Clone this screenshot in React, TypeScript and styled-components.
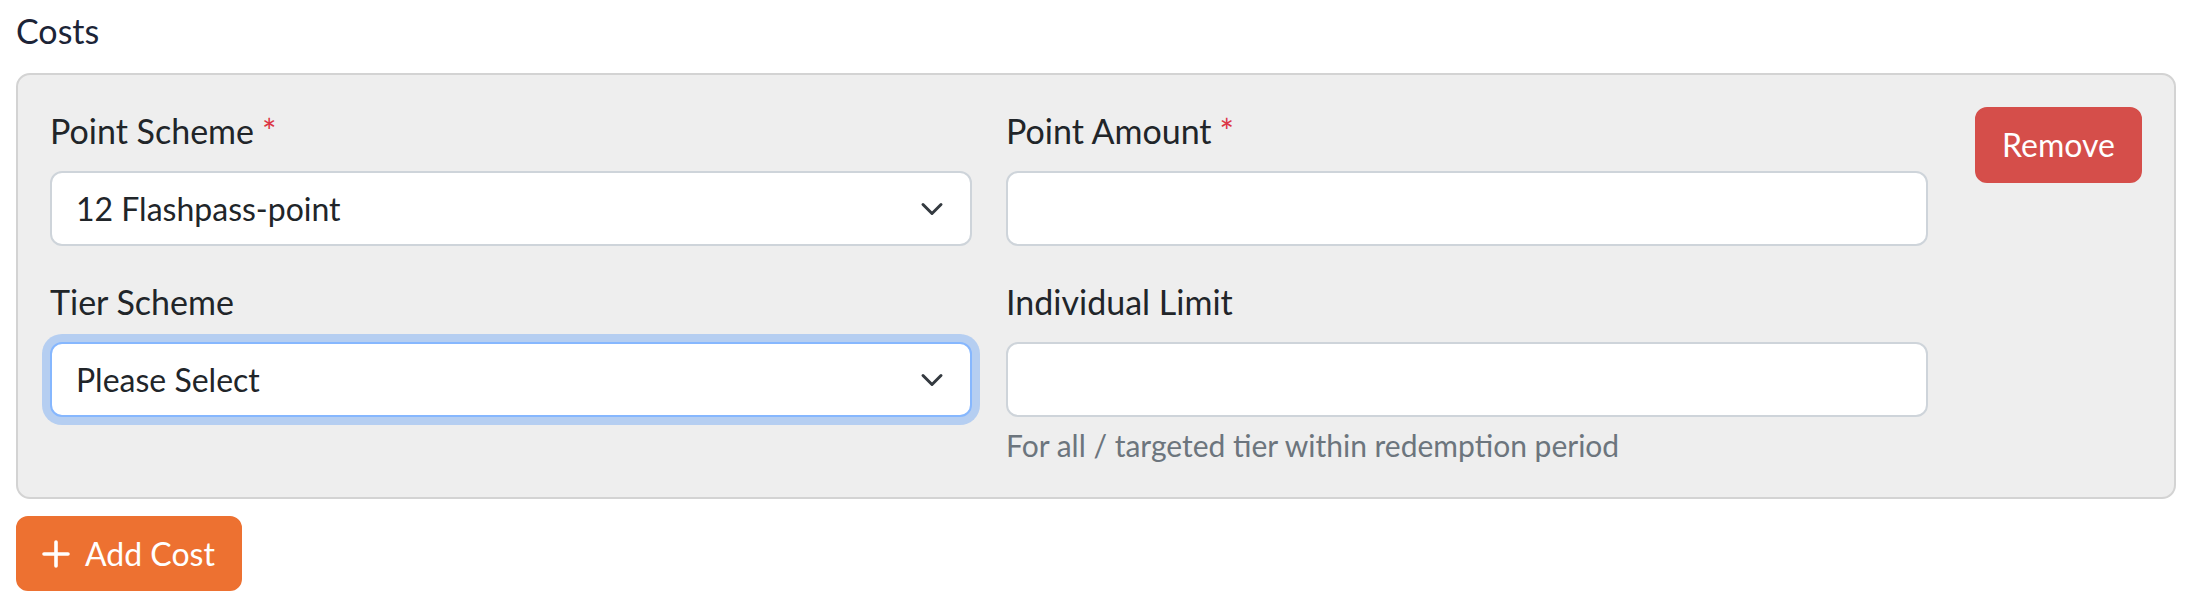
import React from "react";
import styled, { createGlobalStyle } from "styled-components";

const GlobalStyle = createGlobalStyle`
  html, body {
    margin: 0;
    padding: 0;
    background: #ffffff;
  }
  body {
    font-family: Lato, "Noto Sans", sans-serif;
    color: #212529;
  }
  * { box-sizing: border-box; }
`;

const Page = styled.div`
  padding: 7px 22px 0 16px;
  font-family: Lato, "Noto Sans", sans-serif;
`;

const Heading = styled.div`
  font-size: 34px;
  line-height: 48px;
  color: #1c2437;
  margin-bottom: 18px;
`;

const Panel = styled.div`
  display: flex;
  align-items: flex-start;
  background: #eeeeee;
  border: 2px solid #d3d3d3;
  border-radius: 14px;
  padding: 32px 32px 31px 32px;
`;

const Fields = styled.div`
  flex: 1;
  display: grid;
  grid-template-columns: 1fr 1fr;
  column-gap: 34px;
  row-gap: 32px;
`;

const Field = styled.div`
  display: flex;
  flex-direction: column;
  min-width: 0;
`;

const Label = styled.label`
  display: block;
  font-size: 34px;
  line-height: 48px;
  color: #212529;
  margin-bottom: 16px;
`;

const Required = styled.span`
  color: #dc3545;
  margin-left: 8px;
`;

const Control = styled.div<{ $focused?: boolean }>`
  display: flex;
  align-items: center;
  justify-content: space-between;
  height: 75px;
  padding: 0 24px;
  background: #ffffff;
  border: 2px solid ${(p) => (p.$focused ? "#86b7fe" : "#ced4da")};
  border-radius: 12px;
  box-shadow: ${(p) =>
    p.$focused ? "0 0 0 8px rgba(13, 110, 253, 0.25)" : "none"};
  font-size: 32px;
  line-height: 48px;
  color: #212529;
`;

const Value = styled.span`
  white-space: nowrap;
`;

const Chevron = styled.svg`
  width: 24px;
  height: 24px;
  flex: none;
  margin-right: 2px;
`;

const Help = styled.div`
  margin-top: 8px;
  font-size: 30px;
  line-height: 41px;
  color: #6c757d;
`;

const RemoveButton = styled.button`
  flex: none;
  margin-left: 47px;
  height: 76px;
  padding: 0 25px;
  border: 2px solid #d54e4a;
  border-radius: 12px;
  background: #d54e4a;
  color: #ffffff;
  font-family: Lato, "Noto Sans", sans-serif;
  font-size: 32px;
  line-height: 48px;
  cursor: pointer;
`;

const AddButton = styled.button`
  margin-top: 17px;
  display: inline-flex;
  align-items: center;
  gap: 15px;
  height: 75px;
  padding: 0 25px 0 24px;
  border: 2px solid #ed7131;
  border-radius: 12px;
  background: #ed7131;
  color: #ffffff;
  font-family: Lato, "Noto Sans", sans-serif;
  font-size: 32px;
  line-height: 48px;
  cursor: pointer;
`;

const PlusIcon = styled.svg`
  width: 28px;
  height: 28px;
  flex: none;
`;

const ChevronDown = () => (
  <Chevron viewBox="0 0 16 16" fill="none">
    <path
      d="m2 5 6 6 6-6"
      stroke="#343a40"
      strokeWidth="2"
      strokeLinecap="round"
      strokeLinejoin="round"
    />
  </Chevron>
);

const Plus = () => (
  <PlusIcon viewBox="0 0 28 28" fill="none">
    <path
      d="M14 2v24M2 14h24"
      stroke="#ffffff"
      strokeWidth="3.6"
      strokeLinecap="round"
    />
  </PlusIcon>
);

export default function App() {
  return (
    <>
      <GlobalStyle />
      <Page>
        <Heading>Costs</Heading>
        <Panel>
          <Fields>
            <Field>
              <Label>
                Point Scheme<Required>*</Required>
              </Label>
              <Control>
                <Value>12 Flashpass-point</Value>
                <ChevronDown />
              </Control>
            </Field>
            <Field>
              <Label>
                Point Amount<Required>*</Required>
              </Label>
              <Control />
            </Field>
            <Field>
              <Label>Tier Scheme</Label>
              <Control $focused>
                <Value>Please Select</Value>
                <ChevronDown />
              </Control>
            </Field>
            <Field>
              <Label>Individual Limit</Label>
              <Control />
              <Help>For all / targeted tier within redemption period</Help>
            </Field>
          </Fields>
          <RemoveButton>Remove</RemoveButton>
        </Panel>
        <AddButton>
          <Plus />
          Add Cost
        </AddButton>
      </Page>
    </>
  );
}
